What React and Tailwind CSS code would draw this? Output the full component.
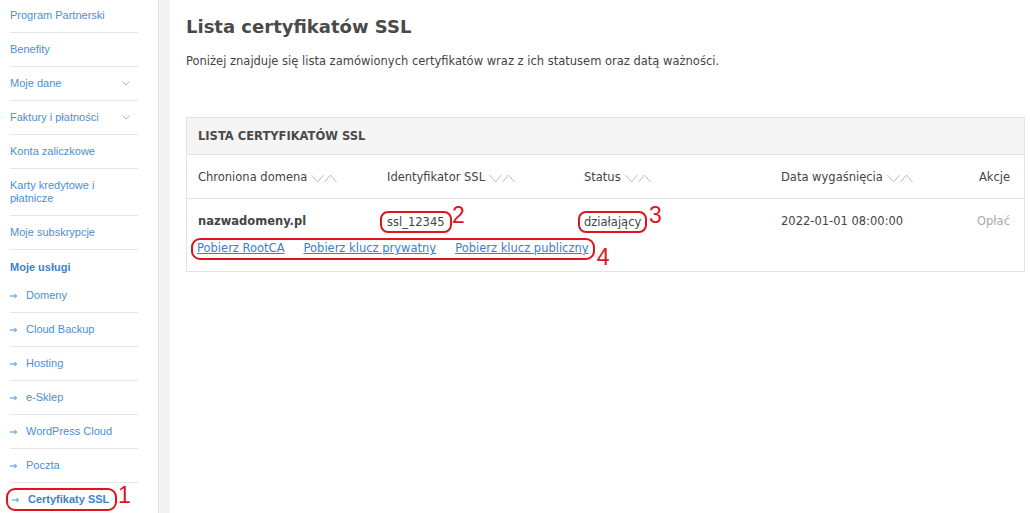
import React from "react";

const side = "font-['Liberation_Sans',Arial,sans-serif]";
const main = "font-['DejaVu_Sans',Verdana,sans-serif]";

function Chevron() {
  return (
    <svg width="8" height="5" viewBox="0 0 8 5" className="text-[#9db9dc]">
      <path d="M0.5 0.5l3.5 3.5 3.5-3.5" fill="none" stroke="currentColor" strokeWidth="1" />
    </svg>
  );
}

function Arrow() {
  return (
    <svg width="8" height="6" viewBox="0 0 8 6" className="text-[#4a8fd6] mr-[8px] shrink-0">
      <path d="M0 3h6.5M4.5 1l2 2-2 2" fill="none" stroke="currentColor" strokeWidth="1" />
    </svg>
  );
}

function SortIcon() {
  return (
    <svg width="26" height="9" viewBox="0 0 26 9" className="ml-[4px] text-[#bdbdbd]">
      <path d="M0.5 1l6 7 6-7" fill="none" stroke="currentColor" strokeWidth="1" />
      <path d="M13.5 8l6-7 6 7" fill="none" stroke="currentColor" strokeWidth="1" />
    </svg>
  );
}

function SideRow({ children, chevron, arrow, tall, first }) {
  return (
    <div
      className={`ml-[10px] mr-[20px] border-b border-[#e6e6e6] flex items-center justify-between ${
        tall ? "py-[10px]" : "h-[34px]"
      } ${first ? "-mt-px" : ""}`}
    >
      <div className="flex items-center">
        {arrow && <Arrow />}
        <span className="leading-[13px]">{children}</span>
      </div>
      {chevron && (
        <span className="mr-[8px] flex">
          <Chevron />
        </span>
      )}
    </div>
  );
}

function Num({ children, className }) {
  return (
    <span
      className={`absolute text-[#e0141e] text-[23px] leading-none font-['Liberation_Sans',Arial,sans-serif] ${className}`}
    >
      {children}
    </span>
  );
}

export default function App() {
  return (
    <div className="w-[1030px] h-[513px] overflow-hidden flex bg-white">
      <aside className={`w-[158px] shrink-0 text-[11px] text-[#4a8fd6] ${side}`}>
        <SideRow first>Program Partnerski</SideRow>
        <SideRow>Benefity</SideRow>
        <SideRow chevron>Moje dane</SideRow>
        <SideRow chevron>Faktury i płatności</SideRow>
        <SideRow>Konta zaliczkowe</SideRow>
        <SideRow tall>
          Karty kredytowe i<br />płatnicze
        </SideRow>
        <SideRow>Moje subskrypcje</SideRow>
        <div className="mx-[10px] pt-[11px] pb-[5px] leading-[13px] font-bold text-[#3f82cc]">Moje usługi</div>
        <SideRow arrow>Domeny</SideRow>
        <SideRow arrow>Cloud Backup</SideRow>
        <SideRow arrow>Hosting</SideRow>
        <SideRow arrow>e-Sklep</SideRow>
        <SideRow arrow>WordPress Cloud</SideRow>
        <SideRow arrow>Poczta</SideRow>
        <div className="relative ml-[6px] mt-[5px]">
          <div className="inline-flex items-center h-[23px] pl-[4px] pr-[6px] border-2 border-[#e0141e] rounded-[9px] font-bold text-[#3f82cc]">
            <Arrow />
            <span>Certyfikaty SSL</span>
          </div>
          <Num className="left-[112px] top-[-4px]">1</Num>
        </div>
      </aside>
      <div className="w-[12px] shrink-0 bg-[#f3f3f3] border-l border-[#e3e3e3]" />
      <main className={`flex-1 pl-[16px] pr-[5px] text-[#444] ${main}`}>
        <h1 className="mt-[15px] text-[18px] font-bold leading-[24px] text-[#4a4a4a]">Lista certyfikatów SSL</h1>
        <p className="mt-[15px] text-[11.5px] leading-[14px]">
          Poniżej znajduje się lista zamówionych certyfikatów wraz z ich statusem oraz datą ważności.
        </p>
        <div className="mt-[49px] border border-[#e3e3e3] text-[11.5px]">
          <div className="h-[37px] bg-[#f5f5f5] border-b border-[#e3e3e3] flex items-center pl-[11px] pt-[2px] font-bold text-[#4a4a4a]">
            LISTA CERTYFIKATÓW SSL
          </div>
          <div className="h-[44px] border-b border-[#e3e3e3] flex items-center pl-[11px] pr-[14px] pt-[3px]">
            <div className="w-[189px] flex items-center">Chroniona domena<SortIcon /></div>
            <div className="w-[197px] flex items-center">Identyfikator SSL<SortIcon /></div>
            <div className="w-[197px] flex items-center">Status<SortIcon /></div>
            <div className="flex-1 flex items-center">Data wygaśnięcia<SortIcon /></div>
            <div>Akcje</div>
          </div>
          <div className="pl-[11px] pr-[14px] pt-[12px] pb-[11px]">
            <div className="flex items-center h-[22px]">
              <div className="w-[189px] font-bold">nazwadomeny.pl</div>
              <div className="w-[197px]">
                <span className="relative inline-block border-2 border-[#e0141e] rounded-[8px] px-[5px] leading-[18px] -ml-[7px]">
                  ssl_12345
                  <Num className="left-[70px] top-[-9px]">2</Num>
                </span>
              </div>
              <div className="w-[197px]">
                <span className="relative inline-block border-2 border-[#e0141e] rounded-[8px] px-[4px] leading-[18px] -ml-[6px]">
                  działający
                  <Num className="left-[69px] top-[-9px]">3</Num>
                </span>
              </div>
              <div className="flex-1">2022-01-01 08:00:00</div>
              <div className="text-[#aaa]">Opłać</div>
            </div>
            <div className="mt-[5px] -ml-[7px]">
              <span className="relative inline-flex items-center gap-[19px] border-2 border-[#e0141e] rounded-[9px] px-[4px] h-[22px] text-[#3a7fc8]">
                <a className="underline">Pobierz RootCA</a>
                <a className="underline">Pobierz klucz prywatny</a>
                <a className="underline">Pobierz klucz publiczny</a>
                <Num className="right-[-17px] top-[6px]">4</Num>
              </span>
            </div>
          </div>
        </div>
      </main>
    </div>
  );
}
